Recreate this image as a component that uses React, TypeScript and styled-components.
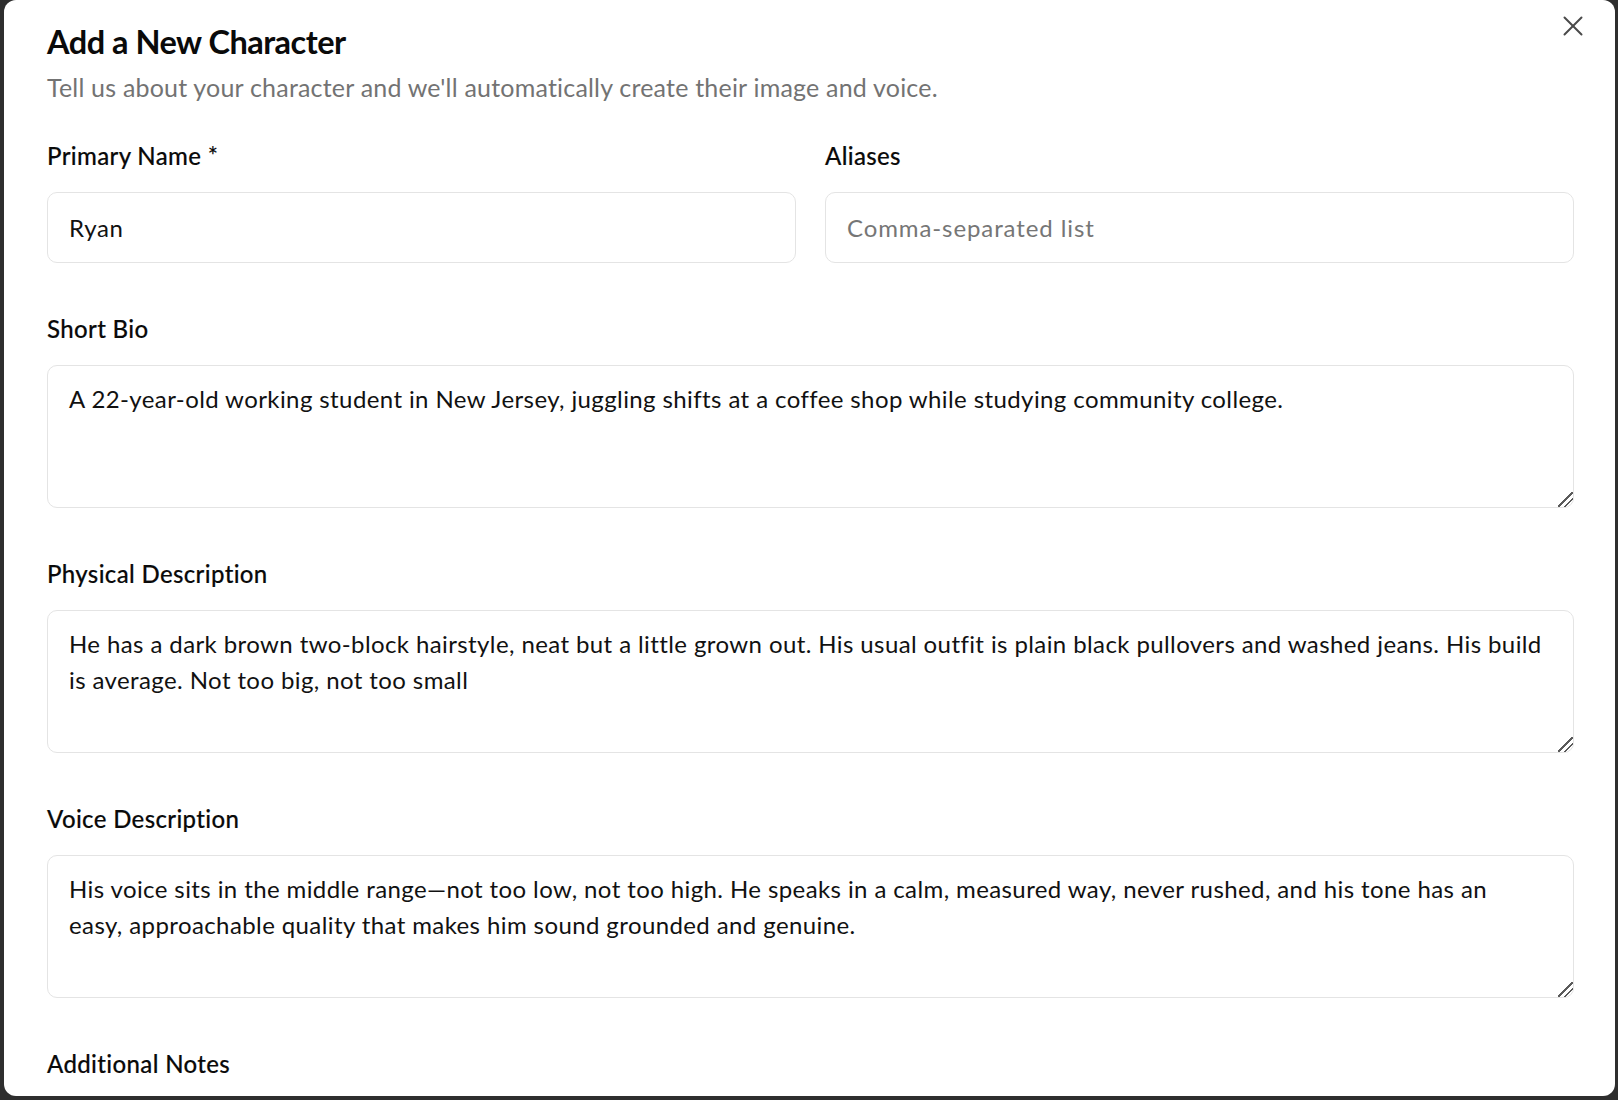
import React, { FC } from 'react'
import styled, { createGlobalStyle } from 'styled-components'
import { X } from 'lucide-react'

const GlobalStyle = createGlobalStyle`
  html, body {
    margin: 0;
    padding: 0;
    height: 100%;
    background: #2e2e2e;
    font-family: Lato, 'Noto Sans', sans-serif;
    color: #111111;
  }
`

const Backdrop = styled.div`
  position: fixed;
  inset: 0;
  background: #2e2e2e;
`

const Dialog = styled.div`
  position: fixed;
  left: 4px;
  top: 0;
  width: 1611px;
  height: 1096px;
  box-sizing: border-box;
  padding: 21px 41px 0 43px;
  background: #ffffff;
  border-radius: 12px;
  overflow: hidden;
`

const CloseButton = styled.button`
  position: absolute;
  top: 8px;
  right: 24px;
  width: 36px;
  height: 36px;
  padding: 0;
  border: none;
  background: transparent;
  color: #4a4a4a;
  display: flex;
  align-items: center;
  justify-content: center;
  cursor: pointer;
`

const Header = styled.div`
  display: flex;
  flex-direction: column;
  gap: 6px;
  margin-bottom: 33px;
`

const Title = styled.h2`
  margin: 0;
  font-size: 32.5px;
  line-height: 42px;
  font-weight: 700;
  letter-spacing: -0.5px;
  color: #0a0a0a;
`

const Subtitle = styled.p`
  margin: 0;
  font-size: 25px;
  line-height: 36px;
  letter-spacing: 0.2px;
  color: #737373;
`

const Form = styled.form`
  display: flex;
  flex-direction: column;
  gap: 48px;
`

const Row = styled.div`
  display: grid;
  grid-template-columns: 1fr 1fr;
  column-gap: 29px;
`

const Field = styled.div`
  display: flex;
  flex-direction: column;
  gap: 18px;
`

const Label = styled.label`
  font-size: 24px;
  line-height: 36px;
  font-weight: 500;
  letter-spacing: 0.35px;
  color: #0a0a0a;
  -webkit-text-stroke: 0.15px #0a0a0a;
`

const fieldBase = `
  box-sizing: border-box;
  width: 100%;
  border: 1px solid #e4e4e4;
  border-radius: 10px;
  background: #ffffff;
  font-family: Lato, 'Noto Sans', sans-serif;
  font-size: 24px;
  color: #111111;
  outline: none;
  &::placeholder {
    color: #767676;
    letter-spacing: 0.9px;
  }
`

const Input = styled.input`
  ${fieldBase}
  height: 71px;
  padding: 0 21px;
  letter-spacing: 0.6px;
`

const TextArea = styled.textarea`
  ${fieldBase}
  height: 143px;
  padding: 15px 30px 15px 21px;
  line-height: 36px;
  letter-spacing: 0.4px;
  resize: vertical;

  &::-webkit-scrollbar {
    width: 18px;
    height: 18px;
  }
  &::-webkit-resizer {
    background: linear-gradient(
      135deg,
      transparent 46%,
      #5a5a5a 46%,
      #5a5a5a 54%,
      transparent 54%,
      transparent 67%,
      #5a5a5a 67%,
      #5a5a5a 75%,
      transparent 75%
    );
  }
`

type FieldSpec = {
  id: string
  label: string
  value: string
}

const longFields: FieldSpec[] = [
  {
    id: 'bio',
    label: 'Short Bio',
    value:
      'A 22-year-old working student in New Jersey, juggling shifts at a coffee shop while studying community college.',
  },
  {
    id: 'physical',
    label: 'Physical Description',
    value:
      'He has a dark brown two-block hairstyle, neat but a little grown out. His usual outfit is plain black pullovers and washed jeans. His build is average. Not too big, not too small',
  },
  {
    id: 'voice',
    label: 'Voice Description',
    value:
      'His voice sits in the middle range\u2014not too low, not too high. He speaks in a calm, measured way, never rushed, and his tone has an easy, approachable quality that makes him sound grounded and genuine.',
  },
]

const App: FC = () => {
  return (
    <>
      <GlobalStyle />
      <Backdrop />
      <Dialog role="dialog">
        <CloseButton aria-label="Close">
          <X size={34} strokeWidth={1.4} />
        </CloseButton>
        <Header>
          <Title>Add a New Character</Title>
          <Subtitle>Tell us about your character and we'll automatically create their image and voice.</Subtitle>
        </Header>
        <Form>
          <Row>
            <Field>
              <Label htmlFor="name">Primary Name *</Label>
              <Input id="name" defaultValue="Ryan" />
            </Field>
            <Field>
              <Label htmlFor="aliases">Aliases</Label>
              <Input id="aliases" placeholder="Comma-separated list" />
            </Field>
          </Row>
          {longFields.map((f) => (
            <Field key={f.id}>
              <Label htmlFor={f.id}>{f.label}</Label>
              <TextArea id={f.id} defaultValue={f.value} />
            </Field>
          ))}
          <Field>
            <Label htmlFor="notes">Additional Notes</Label>
            <TextArea id="notes" />
          </Field>
        </Form>
      </Dialog>
    </>
  )
}

export default App
